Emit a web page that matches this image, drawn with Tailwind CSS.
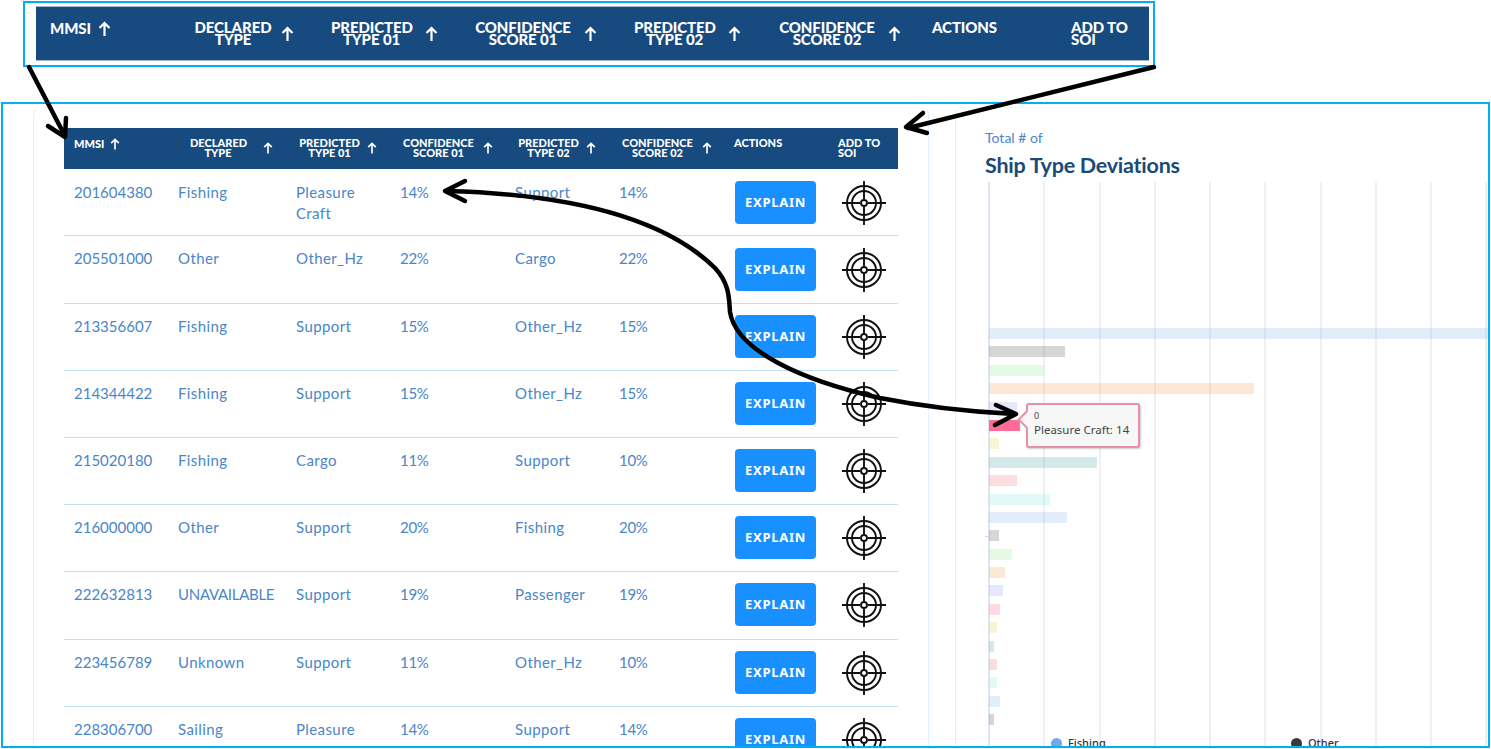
<!DOCTYPE html>
<html lang="en">
<head>
<meta charset="utf-8">
<title>Ship Type Deviations</title>
<script src="https://cdn.jsdelivr.net/npm/@tailwindcss/browser@4"></script>
</head>
<body class="bg-white">
<div class="relative w-[1491px] h-[749px] overflow-hidden bg-white font-['Lato','Noto_Sans',sans-serif] pt-px">

  <!-- Enlarged header callout -->
  <div class="ml-[23px] w-[1132px] h-[66px] border-2 border-[#00b0f0] pl-[11px] pt-[3px]">
    <div class="w-[1113px] h-[55px] bg-[#174a7f] border-y border-[#aab4c4] text-white font-black uppercase text-[15px] leading-[12px] tracking-[-0.1px] grid grid-cols-[139px_146px_144px_156px_148px_153px_139px_88px] pt-[14px]">
      <div class="flex items-start pl-[14px]"><span class="leading-[14px]">MMSI</span><svg class="ml-[7px]" width="13" height="16" viewBox="0 0 13 16" fill="none" stroke="white" stroke-width="2.2"><path d="M6.5 15V2M1.5 7l5-5 5 5"/></svg></div>
      <div class="flex items-start pl-[19px]"><span class="w-[78px] text-center">Declared Type</span><svg class="ml-[9px] mt-[5px]" width="13" height="16" viewBox="0 0 13 16" fill="none" stroke="white" stroke-width="2.2"><path d="M6.5 15V2M1.5 7l5-5 5 5"/></svg></div>
      <div class="flex items-start pl-[10px]"><span class="w-[81px] text-center">Predicted Type 01</span><svg class="ml-[13px] mt-[5px]" width="13" height="16" viewBox="0 0 13 16" fill="none" stroke="white" stroke-width="2.2"><path d="M6.5 15V2M1.5 7l5-5 5 5"/></svg></div>
      <div class="flex items-start pl-[10px]"><span class="w-[96px] text-center">Confidence Score 01</span><svg class="ml-[13px] mt-[5px]" width="13" height="16" viewBox="0 0 13 16" fill="none" stroke="white" stroke-width="2.2"><path d="M6.5 15V2M1.5 7l5-5 5 5"/></svg></div>
      <div class="flex items-start pl-[13px]"><span class="w-[81px] text-center">Predicted Type 02</span><svg class="ml-[13px] mt-[5px]" width="13" height="16" viewBox="0 0 13 16" fill="none" stroke="white" stroke-width="2.2"><path d="M6.5 15V2M1.5 7l5-5 5 5"/></svg></div>
      <div class="flex items-start pl-[10px]"><span class="w-[96px] text-center">Confidence Score 02</span><svg class="ml-[13px] mt-[5px]" width="13" height="16" viewBox="0 0 13 16" fill="none" stroke="white" stroke-width="2.2"><path d="M6.5 15V2M1.5 7l5-5 5 5"/></svg></div>
      <div class="pl-[10px]">Actions</div>
      <div class="pl-[10px]">Add to<br>SOI</div>
    </div>
  </div>

  <!-- Main screenshot frame -->
  <div class="mt-[35px] ml-px w-[1489px] h-[646px] border-2 border-[#00b0f0] overflow-hidden flex items-start pl-[30px] pt-[3px]">

    <!-- Table card -->
    <div class="shrink-0 w-[896px] h-[700px] border border-[#e3f1ff] border-t-[#f3f9ff] rounded-tl-lg rounded-tr-lg pl-[30px] pt-[20px]">
      <div class="w-[834px]">
        <div class="h-[41px] bg-[#174a7f] text-white font-black uppercase text-[11px] leading-[10px] grid grid-cols-[104px_118px_104px_115px_104px_115px_104px_70px] pt-[10px]">
          <div class="flex items-start pl-[10px]"><span class="leading-[11px]">MMSI</span><svg class="ml-[6px]" width="10" height="12" viewBox="0 0 10 12" fill="none" stroke="white" stroke-width="1.7"><path d="M5 11.5V1.5M1.2 5.2 5 1.5l3.8 3.7"/></svg></div>
          <div class="flex items-start pl-[22px]"><span class="w-[56px] text-center">Declared Type</span><svg class="ml-[17px] mt-[4px]" width="10" height="12" viewBox="0 0 10 12" fill="none" stroke="white" stroke-width="1.7"><path d="M5 11.5V1.5M1.2 5.2 5 1.5l3.8 3.7"/></svg></div>
          <div class="flex items-start pl-[13px]"><span class="w-[61px] text-center">Predicted Type 01</span><svg class="ml-[7px] mt-[4px]" width="10" height="12" viewBox="0 0 10 12" fill="none" stroke="white" stroke-width="1.7"><path d="M5 11.5V1.5M1.2 5.2 5 1.5l3.8 3.7"/></svg></div>
          <div class="flex items-start pl-[13px]"><span class="w-[71px] text-center">Confidence Score 01</span><svg class="ml-[9px] mt-[4px]" width="10" height="12" viewBox="0 0 10 12" fill="none" stroke="white" stroke-width="1.7"><path d="M5 11.5V1.5M1.2 5.2 5 1.5l3.8 3.7"/></svg></div>
          <div class="flex items-start pl-[13px]"><span class="w-[61px] text-center">Predicted Type 02</span><svg class="ml-[7px] mt-[4px]" width="10" height="12" viewBox="0 0 10 12" fill="none" stroke="white" stroke-width="1.7"><path d="M5 11.5V1.5M1.2 5.2 5 1.5l3.8 3.7"/></svg></div>
          <div class="flex items-start pl-[13px]"><span class="w-[71px] text-center">Confidence Score 02</span><svg class="ml-[9px] mt-[4px]" width="10" height="12" viewBox="0 0 10 12" fill="none" stroke="white" stroke-width="1.7"><path d="M5 11.5V1.5M1.2 5.2 5 1.5l3.8 3.7"/></svg></div>
          <div class="pl-[10px]">Actions</div>
          <div class="pl-[10px]">Add to<br>SOI</div>
        </div>

        <div class="text-[15px] leading-[21px] tracking-[0.4px] text-[#4a86c8]">
          <!-- row 1 -->
          <div class="h-[67.4px] border-b border-[#bfe0fb] grid grid-cols-[104px_118px_104px_115px_104px_115px_104px_70px]">
            <div class="pl-[10px] pt-[13px] tracking-normal">201604380</div><div class="pl-[10px] pt-[13px]">Fishing</div><div class="pl-[10px] pt-[13px] pr-[20px]">Pleasure Craft</div><div class="pl-[10px] pt-[13px] tracking-[-0.3px]">14%</div><div class="pl-[10px] pt-[13px]">Support</div><div class="pl-[10px] pt-[13px] tracking-[-0.3px]">14%</div>
            <div class="pl-[11px] pt-[12px]"><button class="w-[81px] h-[43px] rounded bg-[#1890ff] text-white font-['Noto_Sans',sans-serif] font-bold text-[13px] tracking-[0.7px]">EXPLAIN</button></div>
            <div class="pl-[14px] pt-[12px]"><svg width="44" height="44" viewBox="0 0 44 44" fill="none" stroke="#111" stroke-width="1.9"><circle cx="22" cy="22" r="17"/><circle cx="22" cy="22" r="12"/><circle cx="22" cy="22" r="3"/><path d="M22 0v18M22 26v18M0 22h18M26 22h18"/></svg></div>
          </div>
          <!-- row 2 -->
          <div class="h-[67.2px] border-b border-[#bfe0fb] grid grid-cols-[104px_118px_104px_115px_104px_115px_104px_70px]">
            <div class="pl-[10px] pt-[12px] tracking-normal">205501000</div><div class="pl-[10px] pt-[12px]">Other</div><div class="pl-[10px] pt-[12px]">Other_Hz</div><div class="pl-[10px] pt-[12px] tracking-[-0.3px]">22%</div><div class="pl-[10px] pt-[12px]">Cargo</div><div class="pl-[10px] pt-[12px] tracking-[-0.3px]">22%</div>
            <div class="pl-[11px] pt-[11.6px]"><button class="w-[81px] h-[43px] rounded bg-[#1890ff] text-white font-['Noto_Sans',sans-serif] font-bold text-[13px] tracking-[0.7px]">EXPLAIN</button></div>
            <div class="pl-[14px] pt-[11.6px]"><svg width="44" height="44" viewBox="0 0 44 44" fill="none" stroke="#111" stroke-width="1.9"><circle cx="22" cy="22" r="17"/><circle cx="22" cy="22" r="12"/><circle cx="22" cy="22" r="3"/><path d="M22 0v18M22 26v18M0 22h18M26 22h18"/></svg></div>
          </div>
          <!-- row 3 -->
          <div class="h-[67.2px] border-b border-[#bfe0fb] grid grid-cols-[104px_118px_104px_115px_104px_115px_104px_70px]">
            <div class="pl-[10px] pt-[12px] tracking-normal">213356607</div><div class="pl-[10px] pt-[12px]">Fishing</div><div class="pl-[10px] pt-[12px]">Support</div><div class="pl-[10px] pt-[12px] tracking-[-0.3px]">15%</div><div class="pl-[10px] pt-[12px]">Other_Hz</div><div class="pl-[10px] pt-[12px] tracking-[-0.3px]">15%</div>
            <div class="pl-[11px] pt-[11px]"><button class="w-[81px] h-[43px] rounded bg-[#1890ff] text-white font-['Noto_Sans',sans-serif] font-bold text-[13px] tracking-[0.7px]">EXPLAIN</button></div>
            <div class="pl-[14px] pt-[11px]"><svg width="44" height="44" viewBox="0 0 44 44" fill="none" stroke="#111" stroke-width="1.9"><circle cx="22" cy="22" r="17"/><circle cx="22" cy="22" r="12"/><circle cx="22" cy="22" r="3"/><path d="M22 0v18M22 26v18M0 22h18M26 22h18"/></svg></div>
          </div>
          <!-- row 4 -->
          <div class="h-[67.2px] border-b border-[#bfe0fb] grid grid-cols-[104px_118px_104px_115px_104px_115px_104px_70px]">
            <div class="pl-[10px] pt-[12px] tracking-normal">214344422</div><div class="pl-[10px] pt-[12px]">Fishing</div><div class="pl-[10px] pt-[12px]">Support</div><div class="pl-[10px] pt-[12px] tracking-[-0.3px]">15%</div><div class="pl-[10px] pt-[12px]">Other_Hz</div><div class="pl-[10px] pt-[12px] tracking-[-0.3px]">15%</div>
            <div class="pl-[11px] pt-[11px]"><button class="w-[81px] h-[43px] rounded bg-[#1890ff] text-white font-['Noto_Sans',sans-serif] font-bold text-[13px] tracking-[0.7px]">EXPLAIN</button></div>
            <div class="pl-[14px] pt-[11px]"><svg width="44" height="44" viewBox="0 0 44 44" fill="none" stroke="#111" stroke-width="1.9"><circle cx="22" cy="22" r="17"/><circle cx="22" cy="22" r="12"/><circle cx="22" cy="22" r="3"/><path d="M22 0v18M22 26v18M0 22h18M26 22h18"/></svg></div>
          </div>
          <!-- row 5 -->
          <div class="h-[67.2px] border-b border-[#bfe0fb] grid grid-cols-[104px_118px_104px_115px_104px_115px_104px_70px]">
            <div class="pl-[10px] pt-[12px] tracking-normal">215020180</div><div class="pl-[10px] pt-[12px]">Fishing</div><div class="pl-[10px] pt-[12px]">Cargo</div><div class="pl-[10px] pt-[12px] tracking-[-0.3px]">11%</div><div class="pl-[10px] pt-[12px]">Support</div><div class="pl-[10px] pt-[12px] tracking-[-0.3px]">10%</div>
            <div class="pl-[11px] pt-[11px]"><button class="w-[81px] h-[43px] rounded bg-[#1890ff] text-white font-['Noto_Sans',sans-serif] font-bold text-[13px] tracking-[0.7px]">EXPLAIN</button></div>
            <div class="pl-[14px] pt-[11px]"><svg width="44" height="44" viewBox="0 0 44 44" fill="none" stroke="#111" stroke-width="1.9"><circle cx="22" cy="22" r="17"/><circle cx="22" cy="22" r="12"/><circle cx="22" cy="22" r="3"/><path d="M22 0v18M22 26v18M0 22h18M26 22h18"/></svg></div>
          </div>
          <!-- row 6 -->
          <div class="h-[67.2px] border-b border-[#bfe0fb] grid grid-cols-[104px_118px_104px_115px_104px_115px_104px_70px]">
            <div class="pl-[10px] pt-[12px] tracking-normal">216000000</div><div class="pl-[10px] pt-[12px]">Other</div><div class="pl-[10px] pt-[12px]">Support</div><div class="pl-[10px] pt-[12px] tracking-[-0.3px]">20%</div><div class="pl-[10px] pt-[12px]">Fishing</div><div class="pl-[10px] pt-[12px] tracking-[-0.3px]">20%</div>
            <div class="pl-[11px] pt-[11px]"><button class="w-[81px] h-[43px] rounded bg-[#1890ff] text-white font-['Noto_Sans',sans-serif] font-bold text-[13px] tracking-[0.7px]">EXPLAIN</button></div>
            <div class="pl-[14px] pt-[11px]"><svg width="44" height="44" viewBox="0 0 44 44" fill="none" stroke="#111" stroke-width="1.9"><circle cx="22" cy="22" r="17"/><circle cx="22" cy="22" r="12"/><circle cx="22" cy="22" r="3"/><path d="M22 0v18M22 26v18M0 22h18M26 22h18"/></svg></div>
          </div>
          <!-- row 7 -->
          <div class="h-[67.2px] border-b border-[#bfe0fb] grid grid-cols-[104px_118px_104px_115px_104px_115px_104px_70px]">
            <div class="pl-[10px] pt-[12px] tracking-normal">222632813</div><div class="pl-[10px] pt-[12px] tracking-[-0.3px]">UNAVAILABLE</div><div class="pl-[10px] pt-[12px]">Support</div><div class="pl-[10px] pt-[12px] tracking-[-0.3px]">19%</div><div class="pl-[10px] pt-[12px]">Passenger</div><div class="pl-[10px] pt-[12px] tracking-[-0.3px]">19%</div>
            <div class="pl-[11px] pt-[11px]"><button class="w-[81px] h-[43px] rounded bg-[#1890ff] text-white font-['Noto_Sans',sans-serif] font-bold text-[13px] tracking-[0.7px]">EXPLAIN</button></div>
            <div class="pl-[14px] pt-[11px]"><svg width="44" height="44" viewBox="0 0 44 44" fill="none" stroke="#111" stroke-width="1.9"><circle cx="22" cy="22" r="17"/><circle cx="22" cy="22" r="12"/><circle cx="22" cy="22" r="3"/><path d="M22 0v18M22 26v18M0 22h18M26 22h18"/></svg></div>
          </div>
          <!-- row 8 -->
          <div class="h-[67.2px] border-b border-[#bfe0fb] grid grid-cols-[104px_118px_104px_115px_104px_115px_104px_70px]">
            <div class="pl-[10px] pt-[12px] tracking-normal">223456789</div><div class="pl-[10px] pt-[12px]">Unknown</div><div class="pl-[10px] pt-[12px]">Support</div><div class="pl-[10px] pt-[12px] tracking-[-0.3px]">11%</div><div class="pl-[10px] pt-[12px]">Other_Hz</div><div class="pl-[10px] pt-[12px] tracking-[-0.3px]">10%</div>
            <div class="pl-[11px] pt-[11px]"><button class="w-[81px] h-[43px] rounded bg-[#1890ff] text-white font-['Noto_Sans',sans-serif] font-bold text-[13px] tracking-[0.7px]">EXPLAIN</button></div>
            <div class="pl-[14px] pt-[11px]"><svg width="44" height="44" viewBox="0 0 44 44" fill="none" stroke="#111" stroke-width="1.9"><circle cx="22" cy="22" r="17"/><circle cx="22" cy="22" r="12"/><circle cx="22" cy="22" r="3"/><path d="M22 0v18M22 26v18M0 22h18M26 22h18"/></svg></div>
          </div>
          <!-- row 9 -->
          <div class="h-[67.2px] grid grid-cols-[104px_118px_104px_115px_104px_115px_104px_70px]">
            <div class="pl-[10px] pt-[12px] tracking-normal">228306700</div><div class="pl-[10px] pt-[12px]">Sailing</div><div class="pl-[10px] pt-[12px] pr-[20px]">Pleasure</div><div class="pl-[10px] pt-[12px] tracking-[-0.3px]">14%</div><div class="pl-[10px] pt-[12px]">Support</div><div class="pl-[10px] pt-[12px] tracking-[-0.3px]">14%</div>
            <div class="pl-[11px] pt-[11px]"><button class="w-[81px] h-[43px] rounded bg-[#1890ff] text-white font-['Noto_Sans',sans-serif] font-bold text-[13px] tracking-[0.7px]">EXPLAIN</button></div>
            <div class="pl-[14px] pt-[11px]"><svg width="44" height="44" viewBox="0 0 44 44" fill="none" stroke="#111" stroke-width="1.9"><circle cx="22" cy="22" r="17"/><circle cx="22" cy="22" r="12"/><circle cx="22" cy="22" r="3"/><path d="M22 0v18M22 26v18M0 22h18M26 22h18"/></svg></div>
          </div>
        </div>
      </div>
    </div>

    <!-- Chart card -->
    <div class="shrink-0 ml-[26px] w-[600px] h-[700px] border-l border-t border-[#e3f1ff] border-t-[#f3f9ff] rounded-tl-lg pl-[29px] pt-[21px]">
      <div class="text-[14px] leading-[18px] text-[#4a86c8]">Total # of</div>
      <div class="mt-[5px] text-[21.5px] leading-[26px] font-bold tracking-[-0.25px] text-[#1a4a7a]">Ship Type Deviations</div>
      <div class="relative mt-[4px] ml-[3px] h-[600px]">
        <div class="absolute inset-0 flex border-l-2 border-[#dfe5f0]">
          <div class="w-[55.25px] shrink-0 border-r-2 border-[#eff0f3]"></div><div class="w-[55.25px] shrink-0 border-r-2 border-[#eff0f3]"></div><div class="w-[55.25px] shrink-0 border-r-2 border-[#eff0f3]"></div><div class="w-[55.25px] shrink-0 border-r-2 border-[#eff0f3]"></div><div class="w-[55.25px] shrink-0 border-r-2 border-[#eff0f3]"></div><div class="w-[55.25px] shrink-0 border-r-2 border-[#eff0f3]"></div><div class="w-[55.25px] shrink-0 border-r-2 border-[#eff0f3]"></div><div class="w-[55.25px] shrink-0 border-r-2 border-[#eff0f3]"></div><div class="w-[55.25px] shrink-0 border-r-2 border-[#eff0f3]"></div>
        </div>
        <div class="absolute left-[-3px] top-[354px] w-[4px] h-px bg-[#cfd6e4]"></div>
        <div class="relative pl-px pt-[146px] flex flex-col gap-[7.4px]">
          <div class="h-[11px] w-[520px] bg-[#6ea6e6]/20"></div>
          <div class="h-[11px] w-[76px] bg-[#333333]/20"></div>
          <div class="h-[11px] w-[55px] bg-[#7fe87f]/20"></div>
          <div class="h-[11px] w-[265px] bg-[#f7a35c]/25"></div>
          <div class="h-[11px] w-[28px] bg-[#8085e9]/20"></div>
          <div class="h-[11px] w-[31px] bg-[#ff6b97]"></div>
          <div class="h-[11px] w-[10px] bg-[#e4d354]/25"></div>
          <div class="h-[11px] w-[108px] bg-[#2b908f]/20"></div>
          <div class="h-[11px] w-[28px] bg-[#f45b5b]/20"></div>
          <div class="h-[11px] w-[61px] bg-[#91e8e1]/25"></div>
          <div class="h-[11px] w-[78px] bg-[#6ea6e6]/20"></div>
          <div class="h-[11px] w-[10px] bg-[#333333]/20"></div>
          <div class="h-[11px] w-[23px] bg-[#7fe87f]/20"></div>
          <div class="h-[11px] w-[16px] bg-[#f7a35c]/25"></div>
          <div class="h-[11px] w-[14px] bg-[#8085e9]/20"></div>
          <div class="h-[11px] w-[11px] bg-[#ff6b97]/25"></div>
          <div class="h-[11px] w-[8px] bg-[#e4d354]/25"></div>
          <div class="h-[11px] w-[5px] bg-[#2b908f]/20"></div>
          <div class="h-[11px] w-[8px] bg-[#f45b5b]/20"></div>
          <div class="h-[11px] w-[8px] bg-[#91e8e1]/25"></div>
          <div class="h-[11px] w-[11px] bg-[#6ea6e6]/20"></div>
          <div class="h-[11px] w-[5px] bg-[#333333]/20"></div>
        </div>
        <!-- Tooltip -->
        <div class="absolute left-[38px] top-[221px] w-[114px] h-[45px] bg-[#f7f7f7] border-2 border-[#e88fa5] rounded-[3px] shadow-[1px_1px_2px_rgba(0,0,0,0.2)] pl-[6px] pt-[5px] font-['Noto_Sans',sans-serif] text-[#444]">
          <div class="absolute left-[-8px] top-[8px] w-[13px] h-[13px] rotate-45 bg-[#f7f7f7] border-l-2 border-b-2 border-[#e88fa5]"></div>
          <div class="relative text-[9px] leading-[12px]">0</div>
          <div class="relative text-[11.5px] leading-[16px] whitespace-nowrap">Pleasure Craft: <span class="tracking-[0.3px]">14</span></div>
        </div>
        <!-- Legend -->
        <div class="absolute left-[63px] top-[553px] flex items-center font-['Noto_Sans',sans-serif] text-[11px] font-medium text-[#333]">
          <span class="w-[11px] h-[11px] rounded-full bg-[#6ea9ea]"></span><span class="ml-[6px] w-[223px]">Fishing</span>
          <span class="w-[11px] h-[11px] rounded-full bg-[#3a3a3e]"></span><span class="ml-[6px]">Other</span>
        </div>
      </div>
    </div>
  </div>

  <!-- Annotation arrows -->
  <svg class="absolute left-0 top-0 pointer-events-none" width="1491" height="749" viewBox="0 0 1491 749" fill="none" stroke="#000" stroke-width="4.5" stroke-linecap="round" stroke-linejoin="round">
    <path d="M29 67 65 136"/>
    <path d="M66 118 65 137 48 126"/>
    <path d="M1154 67 908 128"/>
    <path d="M923 113 906 127 927 133"/>
    <path d="M447 191C560 194 660 214 715 268C730 284 729 300 730 312C736 350 800 380 880 398C930 408 975 412 1014 414"/>
    <path d="M465 181 445 191 465 201"/>
    <path d="M996 405 1016 414 995 425"/>
  </svg>
</div>
</body>
</html>
